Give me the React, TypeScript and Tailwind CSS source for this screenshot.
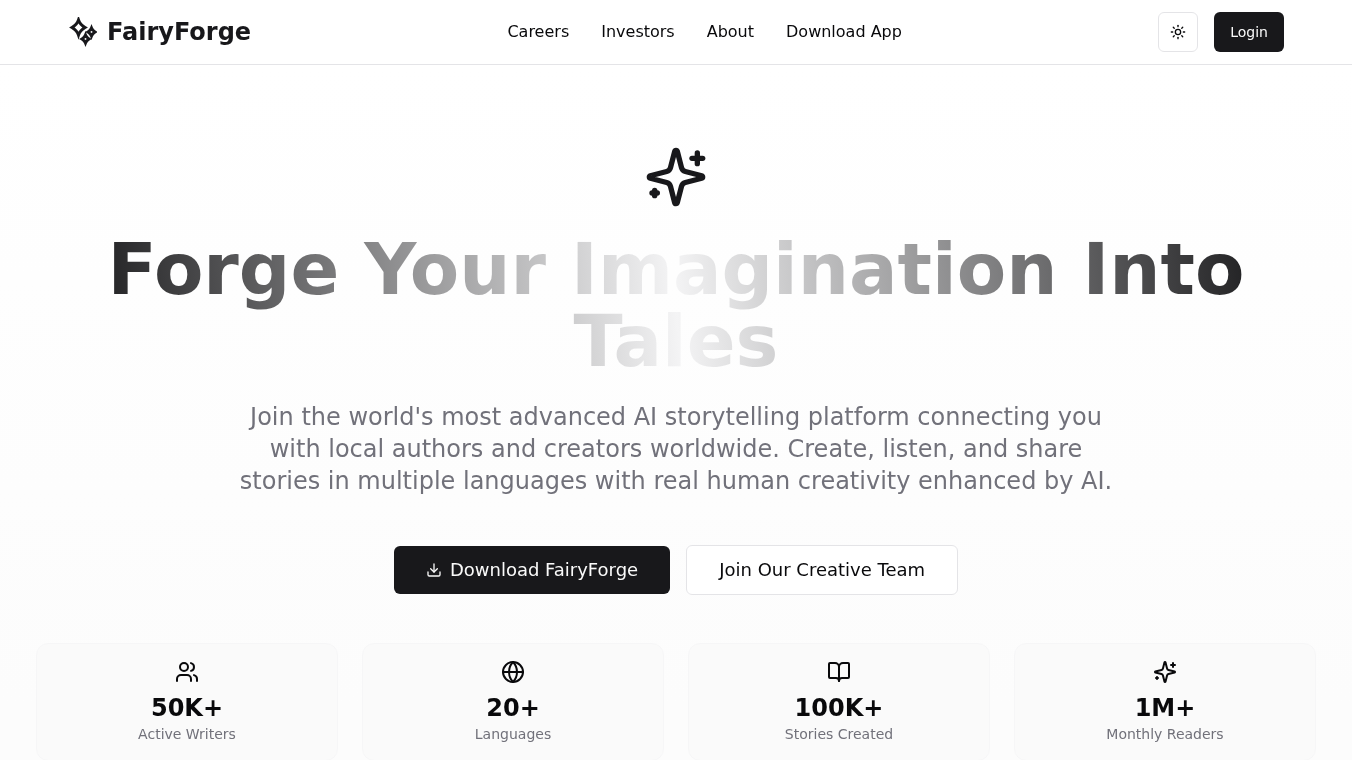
import { BookOpen, Download, Globe, Sun, Users } from "lucide-react";

// older lucide sparkles shape, the installed one has a ring instead of the small plus
function Sparkles({ className }: { className?: string }) {
  return (
    <svg viewBox="0 0 24 24" className={className} fill="none" stroke="currentColor" strokeWidth="2" strokeLinecap="round" strokeLinejoin="round">
      <path d="M9.937 15.5A2 2 0 0 0 8.5 14.063l-6.135-1.582a.5.5 0 0 1 0-.962L8.5 9.936A2 2 0 0 0 9.937 8.5l1.582-6.135a.5.5 0 0 1 .963 0L14.063 8.5A2 2 0 0 0 15.5 9.937l6.135 1.581a.5.5 0 0 1 0 .964L15.5 14.063a2 2 0 0 0-1.437 1.437l-1.582 6.135a.5.5 0 0 1-.963 0z" />
      <path d="M20 3v4" />
      <path d="M22 5h-4" />
      <path d="M4 17v2" />
      <path d="M5 18H3" />
    </svg>
  );
}

const stats = [
  { icon: Users, value: "50K+", label: "Active Writers" },
  { icon: Globe, value: "20+", label: "Languages" },
  { icon: BookOpen, value: "100K+", label: "Stories Created" },
  { icon: Sparkles, value: "1M+", label: "Monthly Readers" },
];

function Logo() {
  return (
    <svg viewBox="0 0 28 30" className="h-[30px] w-[28px] text-[#18181b]" fill="none" stroke="currentColor" strokeWidth="3" strokeLinejoin="miter">
      <path d="M9.5 3 Q11 7.5 16 10.5 Q11 13.5 9.5 18 Q8 13.5 3 10.5 Q8 7.5 9.5 3 Z" />
      <path d="M22.5 11 Q23.5 13.5 26 15 Q23.5 16.5 22.5 19 Q21.5 16.5 19 15 Q21.5 13.5 22.5 11 Z" />
      <path d="M16.5 18 Q17.5 20.5 20 22 Q17.5 23.5 16.5 26 Q15.5 23.5 13 22 Q15.5 20.5 16.5 18 Z" />
    </svg>
  );
}

export default function App() {
  return (
    <div className="h-[760px] overflow-hidden bg-white font-['DejaVu_Sans',sans-serif] text-[#09090b]">
      <header className="h-[65px] border-b border-[#e4e4e7]">
        <div className="mx-auto flex h-16 max-w-[1216px] items-center justify-between will-change-transform">
          <a className="flex items-center gap-[10px] pl-px">
            <Logo />
            <span className="text-2xl font-bold text-[#18181b]">FairyForge</span>
          </a>
          <nav className="flex items-center gap-8 text-base">
            <a>Careers</a>
            <a>Investors</a>
            <a>About</a>
            <a>Download App</a>
          </nav>
          <div className="flex items-center gap-4">
            <button className="flex h-10 w-10 items-center justify-center rounded-md border border-[#e4e4e7] bg-white">
              <Sun className="h-4 w-4" />
            </button>
            <button className="h-10 rounded-md bg-[#18181b] px-4 text-sm text-[#fafafa]">Login</button>
          </div>
        </div>
      </header>

      <main className="bg-[linear-gradient(#ffffff,#fcfcfc_638px)]">
        <section className="flex flex-col items-center px-9 pt-20 will-change-transform">
          <Sparkles className="h-16 w-16 text-[#18181b]" />
          <h1 className="mt-6 w-full bg-[linear-gradient(85deg,#09090b,#f4f4f5,#09090b)] bg-clip-text text-center text-7xl leading-[72px] font-bold text-transparent">
            Forge Your Imagination Into Tales
          </h1>
          <p className="mt-6 max-w-[896px] text-center text-2xl text-[#71717a]">
            Join the world's most advanced AI storytelling platform connecting you with local authors and creators worldwide. Create, listen, and share stories in multiple languages with real human creativity enhanced by AI.
          </p>
          <div className="mt-12 flex items-center gap-4">
            <button className="flex h-12 items-center gap-2 rounded-md bg-[#18181b] px-8 text-lg text-[#fafafa]">
              <Download className="h-4 w-4" />
              Download FairyForge
            </button>
            <button className="h-[50px] rounded-md border border-[#e4e4e7] bg-white px-8 text-lg">Join Our Creative Team</button>
          </div>
          <div className="mt-12 grid w-full grid-cols-4 gap-6">
            {stats.map((s) => (
              <div key={s.label} className="flex flex-col items-center rounded-xl border border-[#f6f6f7] bg-[#fafafa] p-4">
                <s.icon className="h-6 w-6" />
                <div className="mt-2 text-2xl font-bold">{s.value}</div>
                <div className="text-sm text-[#71717a]">{s.label}</div>
              </div>
            ))}
          </div>
        </section>
      </main>
    </div>
  );
}
